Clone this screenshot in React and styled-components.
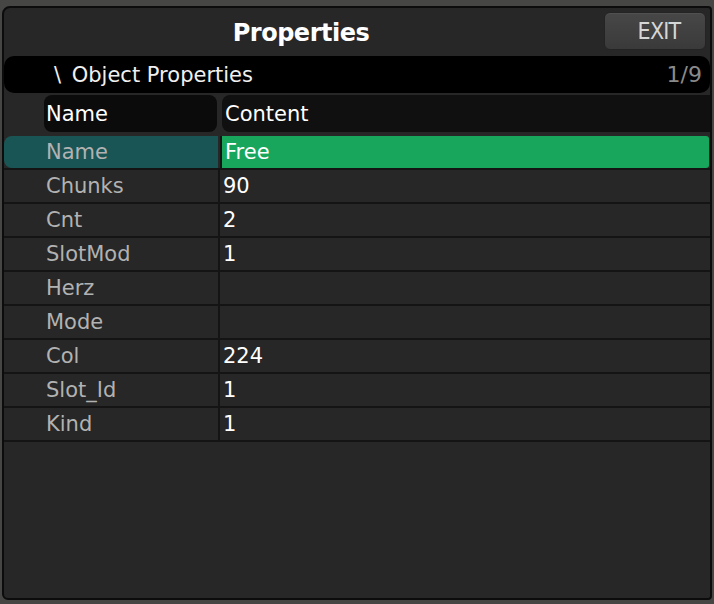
import React from 'react';
import styled, { createGlobalStyle } from 'styled-components';

const GlobalStyle = createGlobalStyle`
  html, body {
    margin: 0;
    padding: 0;
    background: #464644;
    font-family: "DejaVu Sans", "Liberation Sans", sans-serif;
  }
`;

const Panel = styled.div`
  box-sizing: border-box;
  margin: 6px 2px 0 2px;
  width: 710px;
  height: 594px;
  background: #272727;
  border: 2px solid #0c0c0c;
  border-radius: 8px 4px 4px 6px;
  display: flex;
  flex-direction: column;
  overflow: hidden;
`;

const TitleBar = styled.div`
  display: flex;
  align-items: center;
  height: 48px;
  flex-shrink: 0;
`;

const Title = styled.div`
  flex: 1;
  text-align: center;
  color: #fff;
  font-weight: bold;
  font-size: 24px;
  letter-spacing: -0.5px;
  padding: 2px 6px 0 0;
`;

const ExitButton = styled.button`
  box-sizing: border-box;
  width: 102px;
  height: 38px;
  margin: 0 4px 2px 0;
  border: 1px solid #242424;
  border-radius: 6px;
  background: linear-gradient(#474747, #3a3a3a);
  color: #d6d6d6;
  font-family: "DejaVu Sans Condensed", "DejaVu Sans", sans-serif;
  font-stretch: condensed;
  font-size: 23px;
  letter-spacing: -0.8px;
  padding: 0 0 0 8px;
  box-shadow: inset 0 1px 0 #505050;
`;

const PathBar = styled.div`
  display: flex;
  align-items: center;
  justify-content: space-between;
  height: 37px;
  flex-shrink: 0;
  background: #000;
  border-radius: 10px;
  padding: 0 8px 0 50px;
  color: #f0f0f0;
  font-size: 21px;
`;

const Slash = styled.span`
  margin-right: 4px;
`;

const Counter = styled.span`
  color: #8a8a8a;
  font-size: 22px;
`;

const HeaderRow = styled.div`
  display: grid;
  grid-template-columns: 173px 1fr;
  column-gap: 5px;
  height: 37px;
  flex-shrink: 0;
  padding: 2px 0 0 40px;
  margin-bottom: 4px;
`;

const HeaderCell = styled.div`
  display: flex;
  align-items: center;
  background: ${p => (p.$first ? '#0b0b0b' : '#101010')};
  border-radius: ${p => (p.$first ? '8px' : '8px 0 0 8px')};
  padding-left: ${p => (p.$first ? '2px' : '3px')};
  color: #fff;
  font-size: 21px;
`;

const Row = styled.div`
  display: grid;
  grid-template-columns: 214px 1fr;
  height: 34px;
  box-sizing: border-box;
  border-bottom: 2px solid #141414;
  flex-shrink: 0;
`;

const Label = styled.div`
  display: flex;
  align-items: center;
  padding-left: 42px;
  color: #b2b2b2;
  font-size: 21px;
  background: ${p => (p.$active ? '#1a5555' : 'transparent')};
  border-radius: ${p => (p.$active ? '8px 0 0 8px' : '0')};
`;

const Value = styled.div`
  display: flex;
  align-items: center;
  border-left: 2px solid #141414;
  padding-left: 3px;
  color: #fff;
  font-size: 21px;
  background: ${p => (p.$active ? '#17a65c' : 'transparent')};
  margin-left: ${p => (p.$active ? '2px' : '0')};
  border-radius: ${p => (p.$active ? '0 3px 3px 0' : '0')};
  margin-right: ${p => (p.$active ? '1px' : '0')};
`;

const rows = [
  ['Name', 'Free'],
  ['Chunks', '90'],
  ['Cnt', '2'],
  ['SlotMod', '1'],
  ['Herz', ''],
  ['Mode', ''],
  ['Col', '224'],
  ['Slot_Id', '1'],
  ['Kind', '1'],
];

export default function App() {
  return (
    <>
      <GlobalStyle />
      <Panel>
        <TitleBar>
          <Title>Properties</Title>
          <ExitButton>EXIT</ExitButton>
        </TitleBar>
        <PathBar>
          <span><Slash>\</Slash> Object Properties</span>
          <Counter>1/9</Counter>
        </PathBar>
        <HeaderRow>
          <HeaderCell $first>Name</HeaderCell>
          <HeaderCell>Content</HeaderCell>
        </HeaderRow>
        {rows.map(([name, value], i) => (
          <Row key={name}>
            <Label $active={i === 0}>{name}</Label>
            <Value $active={i === 0}>{value}</Value>
          </Row>
        ))}
      </Panel>
    </>
  );
}
